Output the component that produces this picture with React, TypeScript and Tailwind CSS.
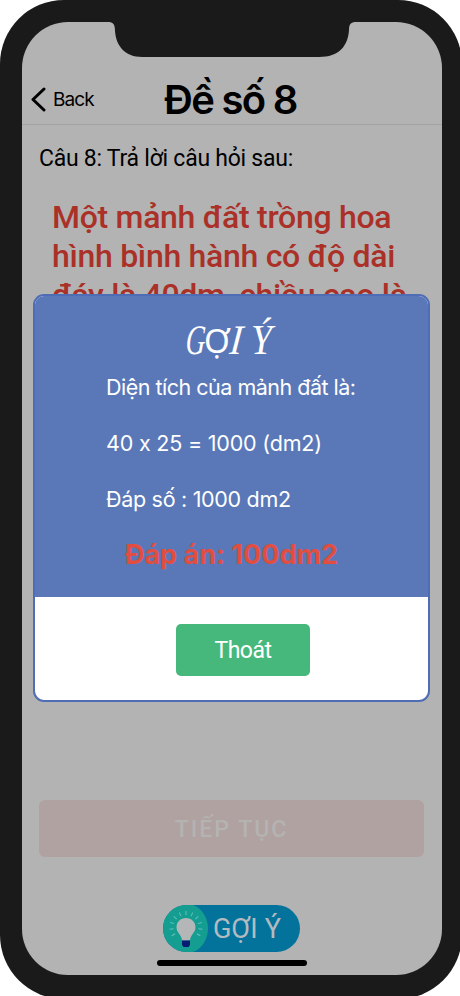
const hints = [
  { text: 'Diện tích của mảnh đất là:', spacing: 'tracking-[-0.5px]' },
  { text: '40 x 25 = 1000 (dm2)', spacing: 'tracking-[-0.2px]' },
  { text: 'Đáp số : 1000 dm2', spacing: 'tracking-[-0.3px]' },
];

const rayAngles = [-120, -96, -72, -48, -24, 0, 24, 48, 72, 96, 120];

function Notch() {
  return (
    <svg
      className="absolute left-[86px] top-0 h-[35px] w-[248px]"
      viewBox="0 0 248 35"
      fill="#1a1a1a">
      <path d="M0 0H248C243 0 241 2 241 8C240 24 231 35 211 35H34C17 35 8 24 7 9C7 2 5 0 0 0Z" />
    </svg>
  );
}

function BulbIcon() {
  return (
    <svg className="size-[47px] shrink-0" viewBox="0 0 47 47">
      <path
        d="M23.5 0H30C39 3 45 13 45 23.5C45 34 39 44 30 47H23.5A23.5 23.5 0 0 1 23.5 0Z"
        fill="#149d91"
      />
      {rayAngles.map((angle) => (
        <path
          key={angle}
          d="M23 6V10"
          stroke="#67c0b9"
          strokeWidth="1"
          transform={`rotate(${angle} 23 22.5)`}
        />
      ))}
      <path
        d="M23 13C17.5 13 13.5 17 13.5 22.3C13.5 28 18.7 29.5 19 35.5H27C27.3 29.5 32.5 28 32.5 22.3C32.5 17 28.5 13 23 13Z"
        fill="#b4b6b7"
      />
      <path d="M19 35.5H27V40L25.5 42H20.5L19 40Z" fill="#071d72" />
    </svg>
  );
}

function Header() {
  return (
    <header className="relative flex h-[103px] items-end border-b border-[#a2a2a2] pb-[12px] pl-[9px]">
      <button className="flex h-[26px] items-center gap-[7px] font-[Inter,sans-serif] text-[19px] tracking-[-0.9px]">
        <svg
          className="h-[25px] w-[15px]"
          viewBox="0 0 15 25"
          fill="none"
          stroke="black"
          strokeWidth="3"
          strokeLinecap="round"
          strokeLinejoin="round">
          <path d="M13 2L2 12.5L13 23" />
        </svg>
        <span className="pt-[2px]">Back</span>
      </button>
      <h1 className="absolute -bottom-px left-[142px] whitespace-nowrap font-[Inter,sans-serif] text-[40px] font-semibold leading-[50px] tracking-[-1.7px]">
        Đề số 8
      </h1>
    </header>
  );
}

function HintModal() {
  return (
    <div className="absolute left-[11px] top-[272px] flex h-[408px] w-[397px] flex-col overflow-hidden rounded-[11px] border-2 border-[#4e6db5] bg-white">
      <div className="flex h-[301px] shrink-0 flex-col bg-[#5a78b8] text-white">
        <h2 className="mt-[21px] flex h-[46px] items-center justify-center text-[42px] leading-none">
          <span className="w-[18px] origin-left -skew-x-6 scale-x-65 font-['Liberation_Serif',serif] italic">
            G
          </span>
          <span className="font-['Noto_Sans',sans-serif] text-[33px]">Ợ</span>
          <span className="w-[21px] origin-left -skew-x-6 scale-x-90 font-['Liberation_Serif',serif] italic">
            I
          </span>
          <span className="w-[26px] origin-left scale-x-90 font-['Liberation_Serif',serif] italic">
            Ý
          </span>
        </h2>
        <div className="ml-[71px] flex flex-col gap-7 pt-[10px] font-[Inter,sans-serif] text-[21.5px] leading-7">
          {hints.map((hint) => (
            <p key={hint.text} className={`whitespace-nowrap ${hint.spacing}`}>
              {hint.text}
            </p>
          ))}
        </div>
        <p className="mt-6 text-center font-[Inter,sans-serif] text-[27px] font-bold leading-9 text-[#e14e3f]">
          Đáp án: 100dm2
        </p>
      </div>
      <div className="flex flex-1 items-start pl-[141px] pt-[27px]">
        <button className="h-[52px] w-[134px] rounded-[5px] bg-[#47b87b] pt-[3px] font-[Roboto,sans-serif] text-[23px] tracking-[-0.5px] text-white">
          Thoát
        </button>
      </div>
    </div>
  );
}

export default function App() {
  return (
    <div className="h-[996px] w-[460px] overflow-hidden bg-white">
      <div className="h-[999px] w-[462px] rounded-[64px] bg-[#1a1a1a] pl-[22px] pt-[22px] text-black">
        <main className="relative flex h-[953px] w-[420px] flex-col overflow-hidden rounded-[46px] bg-[#b3b3b3]">
          <Notch />
          <Header />
          <p className="mt-[20px] pl-[17px] font-[Roboto,sans-serif] text-[23px] leading-7 tracking-[-0.25px]">
            Câu 8: Trả lời câu hỏi sau:
          </p>
          <p className="mt-[25px] whitespace-nowrap pl-[30px] font-[Roboto,sans-serif] text-[32px] font-medium leading-[39px] tracking-[-0.3px] text-[#aa3028]">
            Một mảnh đất trồng hoa
            <br />
            hình bình hành có độ dài
            <br />
            đáy là 40dm, chiều cao là
          </p>
          <div className="mt-auto flex w-[419px] flex-col items-center">
            <button className="mb-[48px] h-[57px] w-[385px] rounded-md bg-[#afa2a1] pt-[3px] font-[Roboto,sans-serif] text-[23px] font-medium tracking-[2px] text-[#aaa7a7]">
              <span className="text-[#b5b3b2]">TIẾP TỤC</span>
            </button>
            <button className="flex h-[47px] w-[137px] items-center rounded-full bg-[#04739c] font-[Roboto,sans-serif] text-[27px] text-[#b4bbc0]">
              <BulbIcon />
              <span className="ml-[3px] whitespace-nowrap pt-px tracking-[0.2px]">
                GỢI Ý
              </span>
            </button>
            <div className="mb-[9px] mt-2 h-[6px] w-[150px] rounded-full bg-black" />
          </div>
          <HintModal />
        </main>
      </div>
    </div>
  );
}
